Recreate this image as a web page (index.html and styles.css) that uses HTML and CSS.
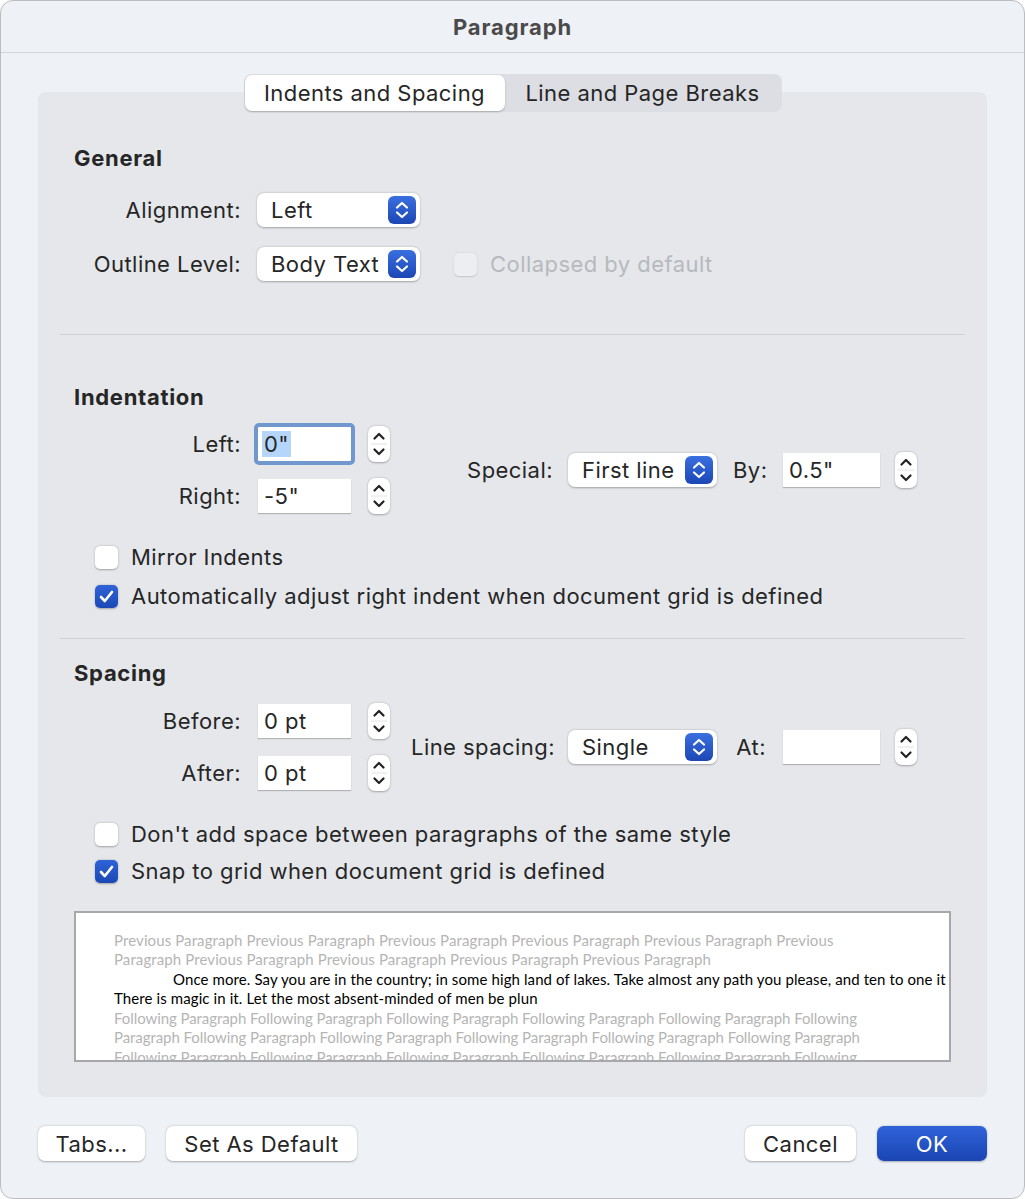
FILE: index.html
```html
<!DOCTYPE html>
<html lang="en">
<head>
    <meta charset="UTF-8">
    <title>Paragraph</title>
    <link rel="stylesheet" href="styles.css">
</head>
<body>
    <div class="window">
        <div class="titlebar">Paragraph</div>

        <div class="panel">
            <div class="tabs">
                <div class="tab active">Indents and Spacing</div>
                <div class="tab">Line and Page Breaks</div>
            </div>

            <!-- General -->
            <section class="section">
                <h2>General</h2>
                <div class="general-grid">
                    <label class="lbl">Alignment:</label>
                    <div class="popup">
                        <span>Left</span>
                        <span class="arrows"><svg viewBox="0 0 28 28" width="28" height="28"><path d="M9 11.5L14 7L19 11.5M9 16.5L14 21L19 16.5" fill="none" stroke="#fff" stroke-width="2.2" stroke-linecap="round" stroke-linejoin="round"/></svg></span>
                    </div>
                    <div></div>
                    <label class="lbl">Outline Level:</label>
                    <div class="popup">
                        <span>Body Text</span>
                        <span class="arrows"><svg viewBox="0 0 28 28" width="28" height="28"><path d="M9 11.5L14 7L19 11.5M9 16.5L14 21L19 16.5" fill="none" stroke="#fff" stroke-width="2.2" stroke-linecap="round" stroke-linejoin="round"/></svg></span>
                    </div>
                    <div class="check disabled collapsed">
                        <span class="box"></span>
                        <span>Collapsed by default</span>
                    </div>
                </div>
            </section>

            <hr class="sep sep-general">

            <!-- Indentation -->
            <section class="section">
                <h2 class="h-indent">Indentation</h2>
                <div class="fields">
                    <div class="num-grid">
                        <label class="lbl">Left:</label>
                        <div class="field focused"><span class="sel">0"</span></div>
                        <div class="stepper"><svg viewBox="0 0 22 36" width="22" height="36"><path d="M6.5 12.5L11 8L15.5 12.5M6.5 23.5L11 28L15.5 23.5" fill="none" stroke="#222" stroke-width="2.2" stroke-linecap="round" stroke-linejoin="round"/><path d="M3 18H19" stroke="#e2e2e2" stroke-width="1"/></svg></div>
                        <label class="lbl">Right:</label>
                        <div class="field">-5"</div>
                        <div class="stepper"><svg viewBox="0 0 22 36" width="22" height="36"><path d="M6.5 12.5L11 8L15.5 12.5M6.5 23.5L11 28L15.5 23.5" fill="none" stroke="#222" stroke-width="2.2" stroke-linecap="round" stroke-linejoin="round"/><path d="M3 18H19" stroke="#e2e2e2" stroke-width="1"/></svg></div>
                    </div>
                    <div class="side">
                        <label class="lbl side-lbl">Special:</label>
                        <div class="popup popup-side">
                            <span>First line</span>
                            <span class="arrows"><svg viewBox="0 0 28 28" width="28" height="28"><path d="M9 11.5L14 7L19 11.5M9 16.5L14 21L19 16.5" fill="none" stroke="#fff" stroke-width="2.2" stroke-linecap="round" stroke-linejoin="round"/></svg></span>
                        </div>
                        <label class="lbl by-lbl">By:</label>
                        <div class="field field-side">0.5"</div>
                        <div class="stepper"><svg viewBox="0 0 22 36" width="22" height="36"><path d="M6.5 12.5L11 8L15.5 12.5M6.5 23.5L11 28L15.5 23.5" fill="none" stroke="#222" stroke-width="2.2" stroke-linecap="round" stroke-linejoin="round"/><path d="M3 18H19" stroke="#e2e2e2" stroke-width="1"/></svg></div>
                    </div>
                </div>
                <div class="checks">
                    <div class="check">
                        <span class="box"></span>
                        <span>Mirror Indents</span>
                    </div>
                    <div class="check">
                        <span class="box on"><svg viewBox="0 0 23 23" width="23" height="23"><path d="M6 12L9.8 16L17 7" fill="none" stroke="#fff" stroke-width="2.6" stroke-linecap="round" stroke-linejoin="round"/></svg></span>
                        <span>Automatically adjust right indent when document grid is defined</span>
                    </div>
                </div>
            </section>

            <hr class="sep sep-indent">

            <!-- Spacing -->
            <section class="section">
                <h2 class="h-spacing">Spacing</h2>
                <div class="fields fields-spacing">
                    <div class="num-grid">
                        <label class="lbl">Before:</label>
                        <div class="field">0 pt</div>
                        <div class="stepper"><svg viewBox="0 0 22 36" width="22" height="36"><path d="M6.5 12.5L11 8L15.5 12.5M6.5 23.5L11 28L15.5 23.5" fill="none" stroke="#222" stroke-width="2.2" stroke-linecap="round" stroke-linejoin="round"/><path d="M3 18H19" stroke="#e2e2e2" stroke-width="1"/></svg></div>
                        <label class="lbl">After:</label>
                        <div class="field">0 pt</div>
                        <div class="stepper"><svg viewBox="0 0 22 36" width="22" height="36"><path d="M6.5 12.5L11 8L15.5 12.5M6.5 23.5L11 28L15.5 23.5" fill="none" stroke="#222" stroke-width="2.2" stroke-linecap="round" stroke-linejoin="round"/><path d="M3 18H19" stroke="#e2e2e2" stroke-width="1"/></svg></div>
                    </div>
                    <div class="side">
                        <label class="lbl side-lbl">Line spacing:</label>
                        <div class="popup popup-side">
                            <span>Single</span>
                            <span class="arrows"><svg viewBox="0 0 28 28" width="28" height="28"><path d="M9 11.5L14 7L19 11.5M9 16.5L14 21L19 16.5" fill="none" stroke="#fff" stroke-width="2.2" stroke-linecap="round" stroke-linejoin="round"/></svg></span>
                        </div>
                        <label class="lbl by-lbl">At:</label>
                        <div class="field field-side"></div>
                        <div class="stepper"><svg viewBox="0 0 22 36" width="22" height="36"><path d="M6.5 12.5L11 8L15.5 12.5M6.5 23.5L11 28L15.5 23.5" fill="none" stroke="#222" stroke-width="2.2" stroke-linecap="round" stroke-linejoin="round"/><path d="M3 18H19" stroke="#e2e2e2" stroke-width="1"/></svg></div>
                    </div>
                </div>
                <div class="checks checks-tight">
                    <div class="check">
                        <span class="box"></span>
                        <span>Don't add space between paragraphs of the same style</span>
                    </div>
                    <div class="check">
                        <span class="box on"><svg viewBox="0 0 23 23" width="23" height="23"><path d="M6 12L9.8 16L17 7" fill="none" stroke="#fff" stroke-width="2.6" stroke-linecap="round" stroke-linejoin="round"/></svg></span>
                        <span>Snap to grid when document grid is defined</span>
                    </div>
                </div>

                <div class="preview">
                    <div class="pv gray">Previous Paragraph Previous Paragraph Previous Paragraph Previous Paragraph Previous Paragraph Previous</div>
                    <div class="pv gray">Paragraph Previous Paragraph Previous Paragraph Previous Paragraph Previous Paragraph</div>
                    <div class="pv first">Once more. Say you are in the country; in some high land of lakes. Take almost any path you please, and ten to one it</div>
                    <div class="pv">There is magic in it. Let the most absent-minded of men be plun</div>
                    <div class="pv gray follow">Following Paragraph Following Paragraph Following Paragraph Following Paragraph Following Paragraph Following</div>
                    <div class="pv gray follow">Paragraph Following Paragraph Following Paragraph Following Paragraph Following Paragraph Following Paragraph</div>
                    <div class="pv gray follow">Following Paragraph Following Paragraph Following Paragraph Following Paragraph Following Paragraph Following</div>
                </div>
            </section>
        </div>

        <div class="footer">
            <div class="btn btn-tabs">Tabs...</div>
            <div class="btn btn-default">Set As Default</div>
            <div class="spacer"></div>
            <div class="btn btn-cancel">Cancel</div>
            <div class="btn btn-ok">OK</div>
        </div>
    </div>
</body>
</html>
```

FILE: styles.css
```css
body {
    margin: 0;
    background: #fff;
    font-family: Inter, "Noto Sans", sans-serif;
    color: #262626;
    letter-spacing: 0.45px;
}
.window {
    width: 1023px;
    height: 1197px;
    border: 1px solid #bcbdc0;
    border-radius: 13px;
    background: #eef1f6;
    overflow: hidden;
    display: flex;
    flex-direction: column;
}
.titlebar {
    height: 51px;
    border-bottom: 1px solid #d3d5d9;
    display: flex;
    align-items: center;
    justify-content: center;
    font-size: 22px;
    font-weight: 700;
    letter-spacing: 0.9px;
    color: #4a4a4a;
}
.panel {
    margin: 39px 37px 0 37px;
    background: #e5e7eb;
    border-radius: 8px;
    padding: 0 22px 35px 22px;
}
.tabs {
    margin: -18px auto 0 auto;
    width: 538px;
    height: 38px;
    box-sizing: border-box;
    background: #dcdee3;
    border-radius: 8px;
    padding: 1px;
    display: flex;
    font-size: 22px;
}
.tab {
    display: flex;
    align-items: center;
    justify-content: center;
    flex: 0 0 auto;
    width: 276px;
    border-radius: 7px;
}
.tab.active {
    width: 260px;
    background: #fff;
    box-shadow: 0 1px 2px rgba(0, 0, 0, 0.25);
}
.section {
    padding-left: 14px;
}
h2 {
    margin: 33px 0 0 0;
    font-size: 22px;
    font-weight: 700;
    letter-spacing: 0.7px;
    line-height: 26px;
    height: 26px;
}
.h-indent {
    margin-top: 49px;
}
.h-spacing {
    margin-top: 21px;
}
.lbl {
    text-align: right;
    font-size: 22px;
    white-space: nowrap;
}
.general-grid {
    margin-top: 22px;
    display: grid;
    grid-template-columns: 167px 163px auto;
    grid-auto-rows: 34px;
    column-gap: 16px;
    row-gap: 20px;
    align-items: center;
}
.popup {
    height: 34px;
    box-sizing: border-box;
    background: #fff;
    border-radius: 7px;
    box-shadow: 0 0.5px 2px rgba(0, 0, 0, 0.3);
    display: flex;
    align-items: center;
    justify-content: space-between;
    padding: 0 4px 0 14px;
    font-size: 22px;
}
.arrows {
    width: 28px;
    height: 28px;
    border-radius: 6px;
    background: linear-gradient(#3a6fe0, #1c47b5);
    display: flex;
}
.check {
    display: flex;
    align-items: center;
    gap: 13px;
    height: 26px;
    font-size: 22px;
    padding-left: 21px;
}
.box {
    width: 23px;
    height: 23px;
    box-sizing: border-box;
    background: #fff;
    border-radius: 5px;
    box-shadow: 0 0.5px 2px rgba(0, 0, 0, 0.3);
    display: flex;
}
.box.on {
    background: linear-gradient(#2f63d8, #1b48b5);
}
.check.disabled {
    color: #b7b9bc;
}
.check.disabled .box {
    background: #eceef1;
    box-shadow: 0 0.5px 1.5px rgba(0, 0, 0, 0.15);
}
.collapsed {
    padding-left: 18px;
}
.sep {
    margin: 53px 0 0 0;
    border: none;
    border-top: 1px solid #cdd0d4;
    height: 0;
}
.sep-indent {
    margin-top: 29px;
}
.fields {
    margin-top: 17px;
    display: flex;
    align-items: center;
}
.fields-spacing {
    margin-top: 18px;
}
.num-grid {
    display: grid;
    grid-template-columns: 167px 93px 22px;
    grid-auto-rows: 34px;
    column-gap: 17px;
    row-gap: 18px;
    align-items: center;
}
.field {
    height: 34px;
    box-sizing: border-box;
    background: #fff;
    box-shadow: 0 1px 1px rgba(0, 0, 0, 0.22);
    display: flex;
    align-items: center;
    padding-left: 6px;
    font-size: 22px;
}
.field.focused {
    outline: 4px solid #7098cf;
    outline-offset: 0;
    border-radius: 1px;
    padding-left: 4px;
}
.sel {
    background: #b5d5fb;
    padding: 0 2px;
}
.stepper {
    width: 22px;
    height: 36px;
    background: #fff;
    border-radius: 7px;
    box-shadow: 0 0.5px 2px rgba(0, 0, 0, 0.3);
    display: flex;
}
.side {
    margin-left: 21px;
    display: flex;
    align-items: center;
}
.side-lbl {
    width: 142px;
}
.popup-side {
    margin-left: 15px;
    width: 149px;
}
.by-lbl {
    width: 33px;
    margin-left: 16px;
}
.field-side {
    width: 97px;
    margin-left: 17px;
}
.side .stepper {
    margin-left: 15px;
}
.checks {
    margin-top: 31px;
    display: flex;
    flex-direction: column;
    gap: 13px;
}
.checks-tight {
    gap: 11px;
}
.preview {
    margin-top: 27px;
    width: 877px;
    height: 151px;
    box-sizing: border-box;
    background: #fff;
    border: 2px solid #a6a8ab;
    padding: 17.5px 0 0 38px;
    overflow: hidden;
    font-family: Lato, "Open Sans", sans-serif;
    font-size: 15px;
    letter-spacing: 0.1px;
    line-height: 19.6px;
    color: #000;
}
.pv {
    white-space: nowrap;
}
.pv.gray {
    color: #b5b5b5;
}
.pv.follow {
    letter-spacing: -0.07px;
}
.pv.first {
    padding-left: 59px;
}
.footer {
    margin-top: 29px;
    padding: 0 37px;
    display: flex;
    align-items: center;
    gap: 21px;
}
.spacer {
    flex: 1;
}
.btn {
    height: 35px;
    box-sizing: border-box;
    background: #fff;
    border-radius: 7px;
    box-shadow: 0 0.5px 2px rgba(0, 0, 0, 0.3);
    display: flex;
    align-items: center;
    justify-content: center;
    font-size: 22px;
}
.btn-tabs {
    width: 107px;
}
.btn-default {
    width: 191px;
}
.btn-cancel {
    width: 111px;
}
.btn-ok {
    width: 110px;
    background: linear-gradient(#2f63d8, #1a45b3);
    color: #fff;
}
```
